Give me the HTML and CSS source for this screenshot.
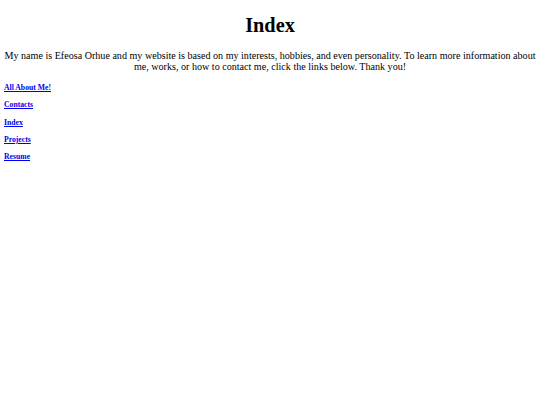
FILE: index.html
```html
<!DOCTYPE html>
<html>
<head>
<meta charset="utf-8">
<link rel="stylesheet" href="styles.css">
</head>
<body class="page">
<h1 class="title">Index</h1>
<p class="intro">My name is Efeosa Orhue and my website is based on my interests, hobbies, and even personality. To learn more information about me, works, or how to contact me, click the links below. Thank you!</p>
<nav class="links">
<a class="link" href="#">All About Me!</a>
<a class="link" href="#">Contacts</a>
<a class="link" href="#">Index</a>
<a class="link" href="#">Projects</a>
<a class="link" href="#">Resume</a>
</nav>
</body>
</html>
```
FILE: styles.css
```css
.page {
  margin: 0;
  padding: 13px 4px;
  font-family: "Liberation Serif", "Times New Roman", serif;
  color: #000;
  background: #fff;
}
.title {
  margin: 0;
  text-align: center;
  font-size: 20.3px;
  font-weight: bold;
  line-height: 24px;
}
.intro {
  margin: 13px 0 0;
  text-align: center;
  font-size: 10.1px;
  line-height: 11.2px;
}
.links {
  display: flex;
  flex-direction: column;
  align-items: flex-start;
  gap: 8.3px;
  margin-top: 10.6px;
}
.link {
  font-size: 7.7px;
  font-weight: bold;
  line-height: 9px;
  color: #0000ee;
}
```
